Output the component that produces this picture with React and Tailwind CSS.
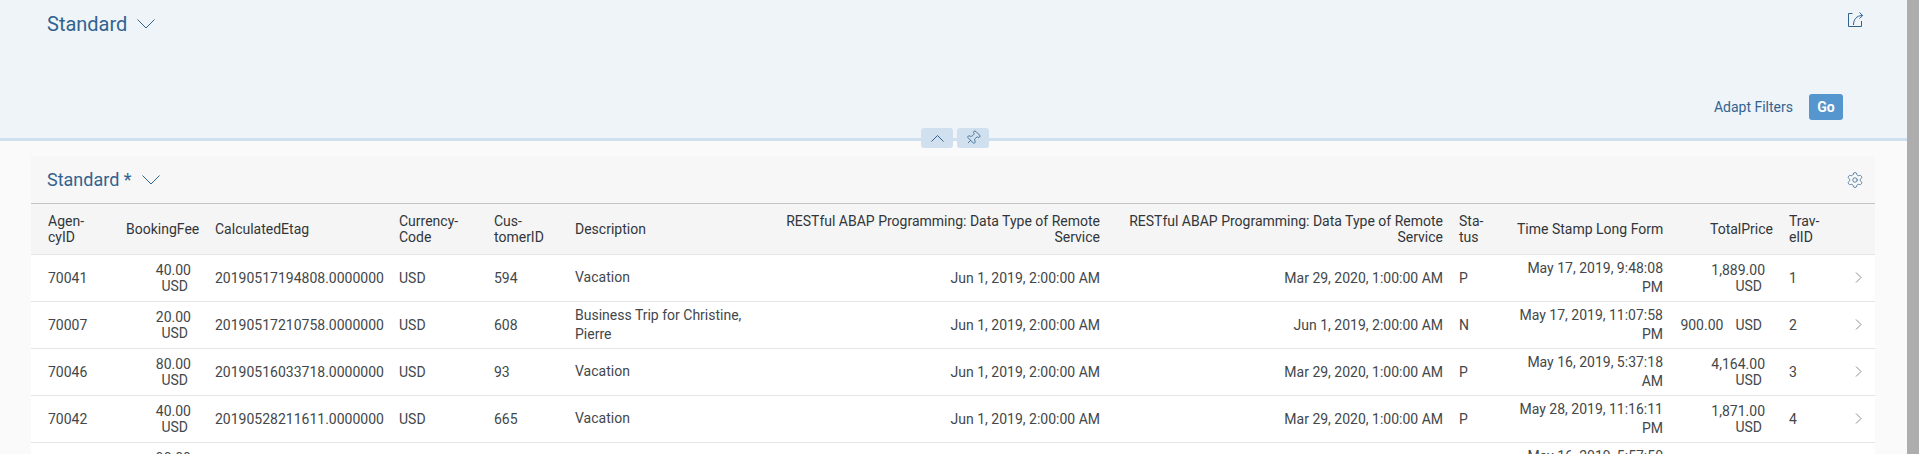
import { Pin, Settings } from "lucide-react"

const rest = "RESTful ABAP Programming: Data Type of Remote"

const rows = [
  { agency: "70041", fee: "40.00", etag: "20190517194808.0000000", customer: "594", desc: "Vacation", begin: "Jun 1, 2019, 2:00:00 AM", end: "Mar 29, 2020, 1:00:00 AM", status: "P", time: "May 17, 2019, 9:48:08", ampm: "PM", total: "1,889.00", id: "1" },
  { agency: "70007", fee: "20.00", etag: "20190517210758.0000000", customer: "608", desc: "Business Trip for Christine, Pierre", begin: "Jun 1, 2019, 2:00:00 AM", end: "Jun 1, 2019, 2:00:00 AM", status: "N", time: "May 17, 2019, 11:07:58", ampm: "PM", total: "900.00", id: "2" },
  { agency: "70046", fee: "80.00", etag: "20190516033718.0000000", customer: "93", desc: "Vacation", begin: "Jun 1, 2019, 2:00:00 AM", end: "Mar 29, 2020, 1:00:00 AM", status: "P", time: "May 16, 2019, 5:37:18", ampm: "AM", total: "4,164.00", id: "3" },
  { agency: "70042", fee: "40.00", etag: "20190528211611.0000000", customer: "665", desc: "Vacation", begin: "Jun 1, 2019, 2:00:00 AM", end: "Mar 29, 2020, 1:00:00 AM", status: "P", time: "May 28, 2019, 11:16:11", ampm: "PM", total: "1,871.00", id: "4" },
  { agency: "70005", fee: "90.00", etag: "20190516175750.0000000", customer: "212", desc: "Vacation", begin: "Jun 1, 2019, 2:00:00 AM", end: "Mar 29, 2020, 1:00:00 AM", status: "P", time: "May 16, 2019, 5:57:50", ampm: "PM", total: "850.00", id: "5" },
]

function TitleChevron() {
  return (
    <svg width="18" height="10" viewBox="0 0 18 10" fill="none" stroke="currentColor" strokeWidth="1">
      <path d="M0.5 0.5L9 9L17.5 0.5" />
    </svg>
  )
}

function ShareIcon() {
  return (
    <svg width="17" height="16" viewBox="0 0 17 16" fill="none" stroke="currentColor" strokeWidth="1">
      <path d="M5.5 1.5H1.5V14.5H14.5V9" />
      <path d="M6.5 13C6.5 7.5 9.5 3.5 15.5 3.5" />
      <path d="M12.5 0.5L15.7 3.5L12.5 6.5" />
    </svg>
  )
}

function Amount({ value }) {
  return (
    <div className="flex flex-wrap justify-end gap-x-3 pr-2 leading-4">
      <span>{value}</span>
      <span className="pr-[3px]">USD</span>
    </div>
  )
}

export default function App() {
  return (
    <div className="flex h-screen overflow-hidden bg-[#fafafa] font-['Roboto',sans-serif] text-sm text-[#32363a]">
      <div className="min-w-0 flex-1">
        <header className="relative h-[141px] border-b-[3px] border-[#d1e0ee] bg-[#eff4f9]">
          <div className="flex items-start justify-between pl-[47px] pr-[43px] pt-[11px]">
            <div className="flex items-center gap-[10px] text-[#32638f]">
              <span className="text-[20px] leading-[26px]">Standard</span>
              <TitleChevron />
            </div>
            <div className="pt-px text-[#32638f]">
              <ShareIcon />
            </div>
          </div>
          <div className="absolute bottom-[18px] right-[64px] flex items-center gap-4">
            <span className="text-[#32638f]">Adapt Filters</span>
            <button className="h-[26px] w-[34px] rounded-[3px] bg-[#5496cd] font-bold text-white">Go</button>
          </div>
          <div className="absolute left-[921px] top-[128px] flex gap-1">
            <button className="flex h-5 w-8 items-center justify-center rounded-[3px] bg-[#d1e0ee] text-[#32638f]">
              <svg width="13" height="7" viewBox="0 0 13 7" fill="none" stroke="currentColor" strokeWidth="1">
                <path d="M0.5 6.5L6.5 0.5L12.5 6.5" />
              </svg>
            </button>
            <button className="flex h-5 w-8 items-center justify-center rounded-[3px] bg-[#d1e0ee] text-[#32638f]">
              <Pin size={16} strokeWidth={1.2} className="rotate-45" />
            </button>
          </div>
        </header>

        <section className="ml-[31px] mr-[32px] mt-[15px]">
          <div className="flex h-[48px] items-center justify-between border-b border-[#c4c4c4] bg-[#f7f7f7] pl-4 pr-[11px] text-[#32638f]">
            <div className="flex items-center gap-[10px]">
              <span className="text-[18px] leading-6">Standard *</span>
              <TitleChevron />
            </div>
            <Settings size={18} strokeWidth={1} />
          </div>
          <table className="w-full table-fixed border-collapse">
            <colgroup>
              <col className="w-[87px]" />
              <col className="w-[89px]" />
              <col className="w-[184px]" />
              <col className="w-[95px]" />
              <col className="w-[81px]" />
              <col className="w-[213px]" />
              <col className="w-[328px]" />
              <col className="w-[343px]" />
              <col className="w-[58px]" />
              <col className="w-[162px]" />
              <col className="w-[110px]" />
              <col className="w-[54px]" />
              <col />
            </colgroup>
            <thead>
              <tr className="h-[50px] border-b border-[#e5e5e5] bg-[#f5f5f5] text-left leading-4 [&>th]:px-2 [&>th]:font-normal">
                <th className="!pl-[17px]">Agen-<br />cyID</th>
                <th className="text-right">BookingFee</th>
                <th>CalculatedEtag</th>
                <th>Currency-<br />Code</th>
                <th>Cus-<br />tomerID</th>
                <th>Description</th>
                <th className="text-right !pl-0">{rest}<br />Service</th>
                <th className="text-right !pl-0">{rest}<br />Service</th>
                <th>Sta-<br />tus</th>
                <th className="whitespace-nowrap text-right">Time Stamp Long Form</th>
                <th className="text-right">TotalPrice</th>
                <th>Trav-<br />elID</th>
                <th />
              </tr>
            </thead>
            <tbody className="bg-white text-[#43474a]">
              {rows.map((r) => (
                <tr key={r.id} className="h-[47px] border-b border-[#e5e5e5] [&>td]:px-2">
                  <td className="!pl-[17px]">{r.agency}</td>
                  <td><Amount value={r.fee} /></td>
                  <td>{r.etag}</td>
                  <td>USD</td>
                  <td>{r.customer}</td>
                  <td className="leading-[19px]">{r.desc}</td>
                  <td className="text-right">{r.begin}</td>
                  <td className="text-right">{r.end}</td>
                  <td>{r.status}</td>
                  <td className="text-right leading-[19px]">{r.time}<br />{r.ampm}</td>
                  <td><Amount value={r.total} /></td>
                  <td>{r.id}</td>
                  <td className="text-[#8c8c8c]">
                    <svg className="ml-3" width="7" height="11" viewBox="0 0 7 11" fill="none" stroke="currentColor" strokeWidth="1">
                      <path d="M1 0.5L6 5.5L1 10.5" />
                    </svg>
                  </td>
                </tr>
              ))}
            </tbody>
          </table>
        </section>
      </div>
      <div className="w-3 shrink-0 bg-[#adadad]" />
    </div>
  )
}
